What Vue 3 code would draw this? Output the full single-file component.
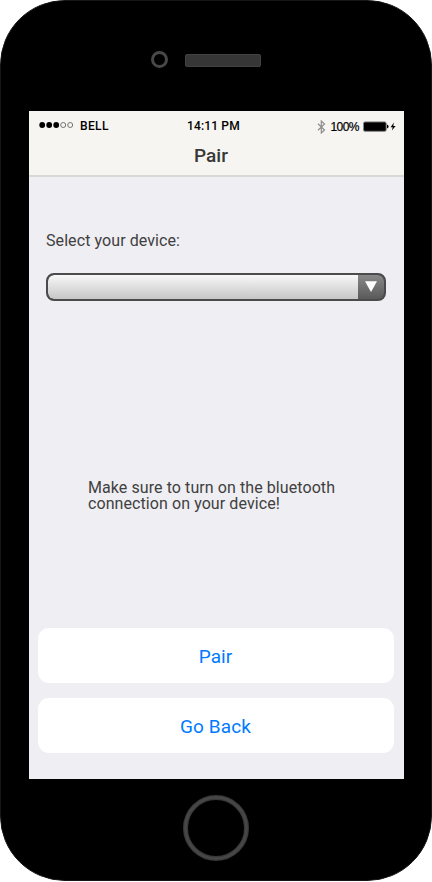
<script setup>
import { ref } from 'vue'

const signal = [true, true, true, false, false]
const actions = ['Pair', 'Go Back']
const device = ref('')
</script>

<template>
  <div class="phone">
    <div class="top">
      <span class="camera"></span>
      <span class="speaker"></span>
    </div>

    <main class="screen">
      <header class="header">
        <div class="status">
          <div class="carrier">
            <svg class="signal" width="36" height="8" viewBox="0 0 36 8">
              <circle
                v-for="(on, i) in signal"
                :key="i"
                :cx="3.2 + i * 7"
                cy="4"
                :r="on ? 2.9 : 2.5"
                :fill="on ? '#000' : 'none'"
                :stroke="on ? 'none' : '#666'"
                stroke-width="0.9"
              />
            </svg>
            <span class="name">BELL</span>
          </div>
          <span class="time">14:11 PM</span>
          <div class="power">
            <svg class="bluetooth" width="9" height="14" viewBox="0 0 9 14">
              <path d="M1 3.8 L7.5 10 L4.3 13 V1 L7.5 4 L1 10.2" fill="none" stroke="#8e8e8e" stroke-width="1.2" />
            </svg>
            <span class="percent">100%</span>
            <svg class="battery" width="34" height="12" viewBox="0 0 34 12">
              <rect x="0.5" y="0.9" width="22.7" height="9.4" rx="1.5" fill="#000" stroke="#858585" />
              <path d="M24 3.6 Q25.6 4 25.6 5.6 Q25.6 7.2 24 7.6 Z" fill="#000" />
              <path d="M30.9 1.6 L27.6 6.3 H29.7 L28.9 9.6 L32.6 4.9 H30.3 Z" fill="#000" />
            </svg>
          </div>
        </div>
        <h1 class="title">Pair</h1>
      </header>

      <section class="content">
        <label class="label">Select your device:</label>
        <div class="select" role="combobox">
          <span class="value">{{ device }}</span>
          <span class="toggle">
            <svg width="14" height="12" viewBox="0 0 14 12">
              <path d="M1 0.3 H13 L7 11 Z" fill="#fff" />
            </svg>
          </span>
        </div>
        <p class="hint">Make sure to turn on the bluetooth<br />connection on your device!</p>
        <div class="actions">
          <button v-for="action in actions" :key="action" class="action">{{ action }}</button>
        </div>
      </section>
    </main>

    <div class="bottom">
      <svg width="66" height="66" viewBox="0 0 66 66">
        <circle cx="33" cy="33" r="30.5" fill="none" stroke="#383838" stroke-width="5" />
        <circle cx="33" cy="33" r="30.5" fill="none" stroke="#474747" stroke-width="2.6" />
      </svg>
    </div>
  </div>
</template>

<style>
body {
  background: #fff;
}
</style>

<style scoped>
.phone {
  box-sizing: border-box;
  width: 432px;
  height: 881px;
  display: flex;
  flex-direction: column;
  border: 1px solid #161616;
  border-radius: 65px;
  background: #000;
  font-family: Roboto, 'Liberation Sans', sans-serif;
  color: #404040;
}

.top {
  box-sizing: border-box;
  height: 110px;
  padding: 50px 0 0 150px;
  display: flex;
  align-items: flex-start;
  gap: 17px;
}

.camera {
  box-sizing: border-box;
  width: 17px;
  height: 17px;
  border: 3px solid #484848;
  border-radius: 50%;
}

.speaker {
  box-sizing: border-box;
  width: 76px;
  height: 13px;
  margin-top: 3px;
  border: 1px solid #424242;
  border-radius: 2px;
  background: #363636;
}

.screen {
  width: 375px;
  height: 668px;
  margin-left: 28px;
  display: flex;
  flex-direction: column;
  background: #efeef3;
}

.header {
  box-sizing: border-box;
  height: 66px;
  border-bottom: 2px solid #d8d8d6;
  background: #f6f5f1;
}

.status {
  height: 30px;
  display: grid;
  grid-template-columns: 158px 60px 1fr;
  align-items: center;
  font-size: 12px;
  font-weight: 500;
  line-height: 14px;
  letter-spacing: 0.15px;
  color: #000;
}

.carrier {
  display: flex;
  align-items: center;
  padding-left: 10px;
  gap: 5px;
}

.signal {
  margin-bottom: 2px;
}

.name {
  letter-spacing: 0.35px;
}

.time {
  white-space: nowrap;
}

.power {
  display: flex;
  align-items: center;
  justify-content: flex-end;
  padding: 1px 7px 0 0;
}

.percent {
  margin: 0 4px 0 5px;
  font-family: 'Liberation Sans', sans-serif;
  font-weight: 400;
  font-size: 12px;
  letter-spacing: -0.55px;
  -webkit-text-stroke: 0.2px #000;
}

.title {
  margin: 3px 0 0;
  padding-right: 11px;
  font-size: 19px;
  font-weight: 500;
  line-height: 24px;
  text-align: center;
  color: #383838;
}

.content {
  flex: 1;
  display: flex;
  flex-direction: column;
}

.label {
  margin: 54px 0 0 17px;
  font-size: 16px;
  line-height: 19px;
  letter-spacing: 0.08px;
}

.select {
  box-sizing: border-box;
  width: 340px;
  height: 28px;
  margin: 23px 0 0 17px;
  display: flex;
  overflow: hidden;
  border: 2px solid #4b4b4b;
  border-radius: 8px;
  background: #4b4b4b;
}

.value {
  flex: 1;
  border-radius: 6px 0 0 6px;
  background: linear-gradient(#f8f8f8, #c6c6c6);
}

.toggle {
  width: 26px;
  display: flex;
  align-items: center;
  justify-content: center;
  border-radius: 0 6px 6px 0;
  background: linear-gradient(#888, #5a5a5a);
}

.hint {
  margin: 179px 0 0 59px;
  font-size: 16px;
  line-height: 16px;
  letter-spacing: 0.08px;
}

.actions {
  margin: 116px 10px 0 9px;
  display: flex;
  flex-direction: column;
  gap: 15px;
}

.action {
  height: 55px;
  padding: 1px 1px 0 0;
  border: 0;
  border-radius: 11px;
  background: #fff;
  color: #007aff;
  font-family: inherit;
  font-size: 19px;
  letter-spacing: 0.1px;
}

.bottom {
  flex: 1;
  padding: 16px 0 0 182px;
}
</style>
